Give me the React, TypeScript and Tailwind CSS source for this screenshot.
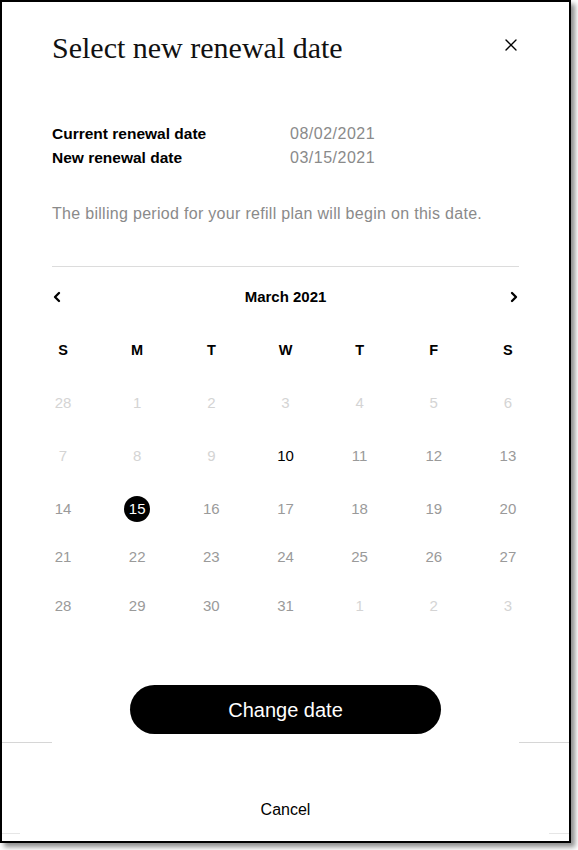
import { X, ChevronLeft, ChevronRight } from "lucide-react";

type Day = { n: number; tone: "off" | "open" | "today" | "picked" };

const weekdays = ["S", "M", "T", "W", "T", "F", "S"];

const off = (n: number): Day => ({ n, tone: "off" });
const open = (n: number): Day => ({ n, tone: "open" });

const weeks: { h: string; days: Day[] }[] = [
  { h: "h-[53px]", days: [off(28), off(1), off(2), off(3), off(4), off(5), off(6)] },
  {
    h: "h-[53px]",
    days: [off(7), off(8), off(9), { n: 10, tone: "today" }, open(11), open(12), open(13)],
  },
  {
    h: "h-[48px]",
    days: [open(14), { n: 15, tone: "picked" }, open(16), open(17), open(18), open(19), open(20)],
  },
  { h: "h-[49px]", days: [open(21), open(22), open(23), open(24), open(25), open(26), open(27)] },
  { h: "h-[48px]", days: [open(28), open(29), open(30), open(31), off(1), off(2), off(3)] },
];

function DayCell({ day }: { day: Day }) {
  if (day.tone === "picked") {
    return (
      <div className="flex h-[18px] w-[22px] items-center justify-center">
        <span className="flex h-[26px] w-[26px] shrink-0 items-center justify-center rounded-full bg-black text-[15px] text-white">
          {day.n}
        </span>
      </div>
    );
  }
  const color =
    day.tone === "off" ? "text-[#d4d4d4]" : day.tone === "today" ? "text-black" : "text-[#9a9a9a]";
  return (
    <div className={`flex h-[18px] w-[22px] items-center justify-center text-[15px] ${color}`}>
      {day.n}
    </div>
  );
}

export default function App() {
  return (
    <div className="h-[850px] w-[578px] bg-white font-['Liberation_Sans',Arial,sans-serif]">
      <div className="flex h-[843px] w-[571px] flex-col border-2 border-black bg-white shadow-[4px_4px_5px_rgba(0,0,0,0.45)]">
        <div className="flex flex-col px-[50px]">
          <div className="flex items-center justify-between pt-[27px]">
            <h2 className="font-['Liberation_Serif',serif] text-[30px] leading-[38px] text-[#111]">
              Select new renewal date
            </h2>
            <X className="mr-[-2px] mt-[-6px] h-[20px] w-[20px] text-black" strokeWidth={1.6} />
          </div>

          <dl className="mt-[57px] flex flex-col gap-[4px] text-[15.5px] leading-[20px]">
            <div className="flex">
              <dt className="w-[238px] font-bold text-black">Current renewal date</dt>
              <dd className="text-[16px] tracking-[0.5px] text-[#8a8a8a]">08/02/2021</dd>
            </div>
            <div className="flex">
              <dt className="w-[238px] font-bold text-black">New renewal date</dt>
              <dd className="text-[16px] tracking-[0.5px] text-[#8a8a8a]">03/15/2021</dd>
            </div>
          </dl>

          <p className="mt-[36px] text-[16px] leading-[20px] tracking-[0.3px] text-[#8a8a8a]">
            The billing period for your refill plan will begin on this date.
          </p>

          <hr className="mt-[42px] border-t border-[#dcdcdc]" />

          <div className="mt-[19px] flex h-[22px] items-center justify-between">
            <ChevronLeft className="ml-[-3px] h-[16px] w-[16px] text-black" strokeWidth={3.5} />
            <span className="text-[15px] font-bold text-black">March 2021</span>
            <ChevronRight className="mr-[-3px] h-[16px] w-[16px] text-black" strokeWidth={3.5} />
          </div>

          <div className="mt-[32px] flex h-[22px] items-center justify-between text-[14.5px] font-bold text-black">
            {weekdays.map((d, i) => (
              <div key={i} className="flex w-[22px] justify-center">
                {d}
              </div>
            ))}
          </div>

          <div className="mt-[32px] flex flex-col">
            {weeks.map((w, i) => (
              <div key={i} className={`flex items-start justify-between ${w.h}`}>
                {w.days.map((d, j) => (
                  <DayCell key={j} day={d} />
                ))}
              </div>
            ))}
          </div>
        </div>

        <div className="mt-[40px] flex justify-center">
          <button className="h-[49px] w-[311px] rounded-full bg-black text-[20px] text-white">
            Change date
          </button>
        </div>

        <div className="mt-[8px] flex justify-between">
          <div className="h-px w-[50px] bg-[#d6d6d6]" />
          <div className="h-px w-[50px] bg-[#d6d6d6]" />
        </div>

        <div className="mt-[55px] flex justify-center">
          <span className="text-[16px] text-black">Cancel</span>
        </div>

        <div className="mt-[11px] flex justify-between">
          <div className="h-px w-[18px] bg-[#e6e6e6]" />
          <div className="h-px w-[20px] bg-[#e6e6e6]" />
        </div>
      </div>
    </div>
  );
}
